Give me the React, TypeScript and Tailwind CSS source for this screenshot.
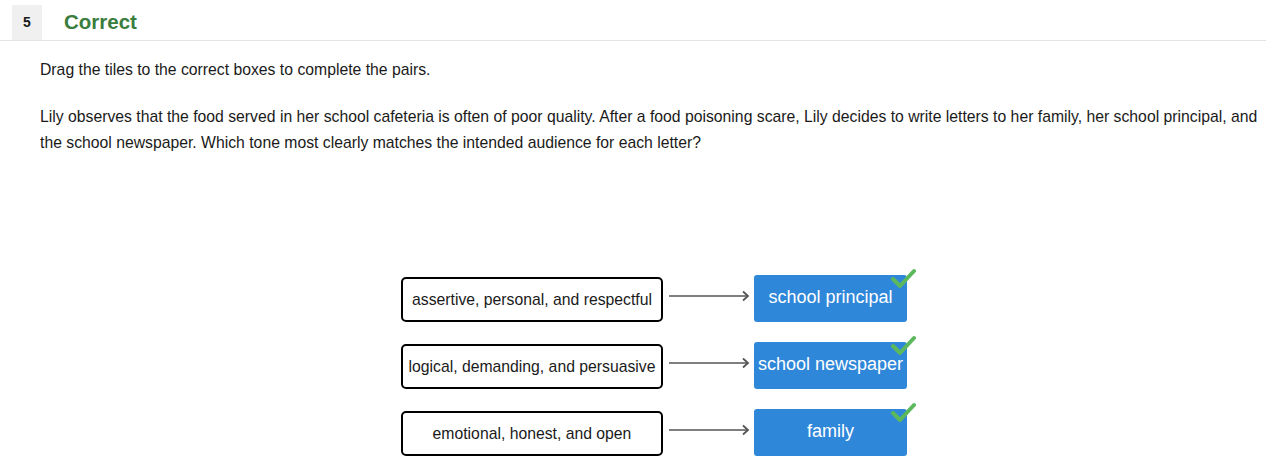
const pairs = [
  { tone: "assertive, personal, and respectful", target: "school principal" },
  { tone: "logical, demanding, and persuasive", target: "school newspaper" },
  { tone: "emotional, honest, and open", target: "family" },
];

function Check() {
  return (
    <svg className="absolute -right-[9px] -top-[7px]" width="26" height="22" viewBox="0 0 26 22">
      <path d="M3 11 L10 18 L24 3" fill="none" stroke="#5cb85c" strokeWidth="4" strokeLinecap="round" strokeLinejoin="round" />
    </svg>
  );
}

function Arrow() {
  return (
    <svg width="91" height="14" viewBox="0 0 91 14" className="shrink-0 mt-[14px]">
      <line x1="6" y1="7" x2="85" y2="7" stroke="#555" strokeWidth="1.3" />
      <path d="M80 2.5 L85 7 L80 11.5" fill="none" stroke="#555" strokeWidth="1.8" />
    </svg>
  );
}

export default function App() {
  return (
    <main className="min-h-screen bg-white text-[#1a1a1a]" style={{ fontFamily: '"Liberation Sans", Arial, sans-serif' }}>
      <header className="flex items-center h-[41px] pt-[5px] pl-[12px] border-b border-[#e3e3e3]">
        <div className="w-[30px] h-[35px] bg-[#f0f0f0] flex items-center justify-center text-[14px] font-bold">5</div>
        <h1 className="ml-[22px] text-[20.5px] font-bold text-[#3a7d3e]">Correct</h1>
      </header>

      <section className="pl-[40px] pr-[6px] text-[15.75px]">
        <p className="mt-[16px] leading-[26px]">Drag the tiles to the correct boxes to complete the pairs.</p>
        <p className="mt-[21px] leading-[26px]">
          Lily observes that the food served in her school cafeteria is often of poor quality. After a food poisoning scare, Lily decides to write letters to her family, her school principal, and the school newspaper. Which tone most clearly matches the intended audience for each letter?
        </p>

        <div className="mt-[119px] ml-[361px] flex flex-col gap-[20px]">
          {pairs.map((p) => (
            <div key={p.target} className="flex items-start">
              <div className="mt-[2px] w-[262px] h-[45px] border-2 border-black rounded-[5px] flex items-center justify-center whitespace-nowrap">
                {p.tone}
              </div>
              <Arrow />
              <div className="relative w-[153px] h-[47px] pb-[3px] bg-[#2f87d9] rounded-[3px] flex items-center justify-center text-white text-[18px] whitespace-nowrap">
                {p.target}
                <Check />
              </div>
            </div>
          ))}
        </div>
      </section>
    </main>
  );
}
